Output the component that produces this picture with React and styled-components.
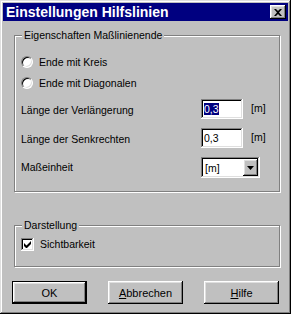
import styled, { createGlobalStyle } from "styled-components";

const GlobalStyle = createGlobalStyle`
  html, body {
    margin: 0;
    padding: 0;
    background: #c0c0c0;
  }
  body {
    font-family: "Liberation Sans", Arial, sans-serif;
    font-size: 10.5px;
    color: #000;
  }
`;

const raised = `
  box-shadow:
    inset -1px -1px #000,
    inset 1px 1px #fff,
    inset -2px -2px #808080,
    inset 2px 2px #dfdfdf;
`;

const sunken = `
  box-shadow:
    inset -1px -1px #fff,
    inset 1px 1px #808080,
    inset -2px -2px #dfdfdf,
    inset 2px 2px #000;
`;

const Window = styled.div`
  box-sizing: border-box;
  width: 291px;
  height: 314px;
  padding: 3px;
  background: #c0c0c0;
  box-shadow:
    inset -1px -1px #000,
    inset 1px 1px #dfdfdf,
    inset -2px -2px #808080,
    inset 2px 2px #fff;
  display: flex;
  flex-direction: column;
`;

const TitleBar = styled.div`
  height: 18px;
  background: #000080;
  color: #fff;
  display: flex;
  align-items: center;
  justify-content: space-between;
  padding: 0 2px 0 3px;
`;

const Title = styled.span`
  font-weight: bold;
  font-size: 14px;
  line-height: 18px;
`;

const CloseButton = styled.div`
  width: 16px;
  height: 14px;
  background: #c0c0c0;
  ${raised}
  display: flex;
  align-items: center;
  justify-content: center;
`;

const Body = styled.div`
  padding: 8px 8px 0 11px;
  display: flex;
  flex-direction: column;
`;

const Group = styled.fieldset`
  margin: ${(p) => p.$top}px 0 0 0;
  padding: ${(p) => p.$padTop}px 6px ${(p) => p.$padBottom}px 6px;
  border: 1px solid #808080;
  box-shadow: inset 1px 1px #fff, 1px 1px #fff;
  width: 266px;
  box-sizing: border-box;
  min-width: 0;
`;

const Legend = styled.legend`
  padding: 0 2px;
  margin-left: 1px;
  line-height: 13px;
  background: #c0c0c0;
`;

const RadioRow = styled.label`
  height: 21px;
  display: flex;
  align-items: center;
  gap: 6px;
`;

const RadioCircle = styled.span`
  width: 12px;
  height: 12px;
  border-radius: 50%;
  background: #fff;
  box-sizing: border-box;
  border: 1px solid;
  border-color: #808080 #fff #fff #808080;
  box-shadow: inset 1px 1px #000, inset -1px -1px #dfdfdf;
`;

const FieldRow = styled.div`
  height: 29px;
  display: flex;
  align-items: flex-start;
  margin-top: ${(p) => p.$top || 0}px;
`;

const FieldLabel = styled.span`
  width: 180px;
  line-height: 13px;
  margin-top: ${(p) => p.$offset}px;
`;

const TextField = styled.div`
  box-sizing: border-box;
  width: 42px;
  height: 20px;
  background: #fff;
  ${sunken}
  padding: 4px 0 0 3px;
  line-height: 13px;
`;

const Selected = styled.span`
  background: #000080;
  color: #fff;
`;

const Unit = styled.span`
  margin: 3px 0 0 8px;
  line-height: 13px;
`;

const SelectField = styled.div`
  box-sizing: border-box;
  width: 59px;
  height: 21px;
  background: #fff;
  ${sunken}
  padding: 2px;
  display: flex;
  align-items: stretch;
  justify-content: space-between;
`;

const SelectValue = styled.span`
  padding: 3px 0 0 2px;
  line-height: 13px;
`;

const DropButton = styled.span`
  width: 15px;
  background: #c0c0c0;
  ${raised}
  display: flex;
  align-items: center;
  justify-content: center;
`;

const CheckRow = styled.label`
  height: 20px;
  display: flex;
  align-items: center;
  gap: 6px;
`;

const CheckBox = styled.span`
  width: 13px;
  height: 13px;
  background: #fff;
  box-sizing: border-box;
  ${sunken}
  display: flex;
  align-items: center;
  justify-content: center;
`;

const ButtonRow = styled.div`
  display: flex;
  gap: 21px;
  padding: 14px 0 0 9px;
`;

const Button = styled.div`
  box-sizing: border-box;
  width: 75px;
  height: 23px;
  background: #c0c0c0;
  display: flex;
  align-items: center;
  justify-content: center;
  ${raised}
  border: ${(p) => (p.$default ? "1px solid #000" : "none")};
  font-size: 11px;
`;

const Key = styled.span`
  text-decoration: underline;
`;

export default function App() {
  return (
    <>
      <GlobalStyle />
      <Window>
        <TitleBar>
          <Title>Einstellungen Hilfslinien</Title>
          <CloseButton>
            <svg width="8" height="7" viewBox="0 0 8 7">
              <path d="M0 0h2l2 2 2-2h2L5 3.5 8 7H6L4 5 2 7H0l3-3.5z" fill="#000" />
            </svg>
          </CloseButton>
        </TitleBar>
        <Body>
          <Group $top={0} $padTop={9} $padBottom={5}>
            <Legend>Eigenschaften Maßlinienende</Legend>
            <RadioRow>
              <RadioCircle />
              Ende mit Kreis
            </RadioRow>
            <RadioRow>
              <RadioCircle />
              Ende mit Diagonalen
            </RadioRow>
            <FieldRow $top={6}>
              <FieldLabel $offset={5}>Länge der Verlängerung</FieldLabel>
              <TextField>
                <Selected>0,3</Selected>
              </TextField>
              <Unit>[m]</Unit>
            </FieldRow>
            <FieldRow>
              <FieldLabel $offset={5}>Länge der Senkrechten</FieldLabel>
              <TextField>0,3</TextField>
              <Unit>[m]</Unit>
            </FieldRow>
            <FieldRow>
              <FieldLabel $offset={4}>Maßeinheit</FieldLabel>
              <SelectField>
                <SelectValue>[m]</SelectValue>
                <DropButton>
                  <svg width="7" height="4" viewBox="0 0 7 4">
                    <path d="M0 0h7L3.5 4z" fill="#000" />
                  </svg>
                </DropButton>
              </SelectField>
            </FieldRow>
          </Group>
          <Group $top={27} $padTop={2} $padBottom={12}>
            <Legend>Darstellung</Legend>
            <CheckRow>
              <CheckBox>
                <svg width="7" height="7" viewBox="0 0 7 7">
                  <path d="M0 2v3l2 2h1l4-4V0L2.5 4.5z" fill="#000" />
                </svg>
              </CheckBox>
              Sichtbarkeit
            </CheckRow>
          </Group>
        </Body>
        <ButtonRow>
          <Button $default>OK</Button>
          <Button>
            <span>
              <Key>A</Key>bbrechen
            </span>
          </Button>
          <Button>
            <span>
              <Key>H</Key>ilfe
            </span>
          </Button>
        </ButtonRow>
      </Window>
    </>
  );
}
